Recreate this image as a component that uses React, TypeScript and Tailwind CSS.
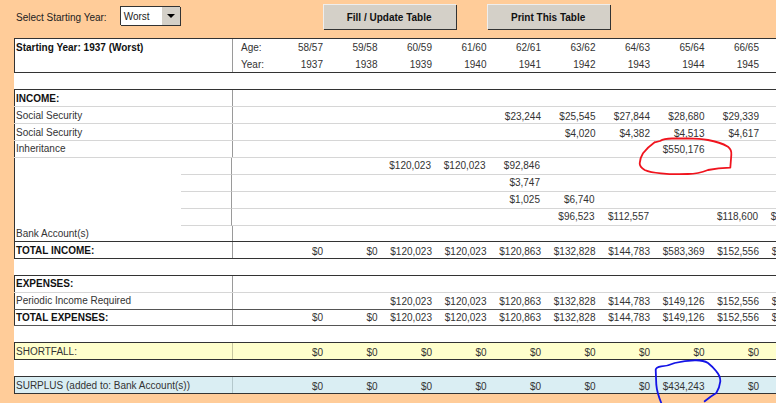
const money = ["$120,023", "$120,023", "$120,863", "$132,828", "$144,783"]

function Cells({ vals }: { vals: string[] }) {
  return (
    <>
      {vals.map((v, i) => (
        <div key={i} className="w-[54.5px] shrink-0 text-right whitespace-nowrap">
          {v}
        </div>
      ))}
    </>
  )
}

function Row({
  label,
  vals = [],
  age = "",
  bold = false,
  line = "border-[#d6d6d6]",
  sub = false,
  low = false,
  short = false,
  divider = "border-[#9a9a9a]",
}: {
  label?: string
  vals?: string[]
  age?: string
  bold?: boolean
  line?: string
  sub?: boolean
  low?: boolean
  short?: boolean
  divider?: string
}) {
  return (
    <div className={`flex items-center ${short ? "h-[16px]" : "h-[17px]"} ${sub ? "" : `border-b ${line}`}`}>
      {sub ? (
        <div className="flex h-full w-[217px] shrink-0 border-l border-[#333]">
          <div className="w-[167px]" />
          <div className="w-[50px] border-b border-[#d6d6d6]" />
        </div>
      ) : (
        <div
          className={`h-full w-[218px] shrink-0 border-l border-[#333] pl-[1px] whitespace-nowrap ${low ? "leading-[18px]" : "leading-[16px]"} ${bold ? "font-bold text-[#111]" : ""}`}
        >
          {label}
        </div>
      )}
      <div
        className={`flex h-full flex-1 items-center border-l ${divider} ${low ? "pt-[2px]" : ""} ${sub ? "border-b border-b-[#d6d6d6] pb-[2px]" : ""}`}
      >
        <div className="w-[35.5px] shrink-0 pl-[8px]">{age}</div>
        <Cells vals={vals} />
      </div>
    </div>
  )
}

export default function App() {
  return (
    <div
      className="relative flex h-[403px] w-[776px] flex-col overflow-hidden bg-[#ffcc99] text-[10px] text-[#333]"
      style={{ fontFamily: '"Liberation Sans", Arial, sans-serif' }}
    >
      {/* Toolbar */}
      <div className="flex h-[38px] shrink-0 items-start">
        <span className="ml-[16px] mt-[10px] text-[#222]">Select Starting Year:</span>
        <div className="ml-[13px] mt-[6px] flex h-[19px] w-[60px] border-t border-l border-[#333] bg-white shadow-[1px_1px_0_#333]">
          <span className="flex-1 pl-[3px] leading-[19px] text-[#222]">Worst</span>
          <div className="flex w-[18px] items-center justify-center bg-[#d4d0c8]">
            <div className="h-0 w-0 border-x-[4px] border-t-[4px] border-x-transparent border-t-black" />
          </div>
        </div>
        <button className="ml-[143px] mt-[4px] h-[25px] w-[133px] bg-[#d4d0c8] pt-[1px] text-center font-bold text-[#111] shadow-[1px_1px_0_#333,inset_1px_1px_0_#eeeeee]">
          Fill / Update Table
        </button>
        <button className="ml-[31px] mt-[4px] h-[25px] w-[123px] bg-[#d4d0c8] pt-[1px] text-center font-bold text-[#111] shadow-[1px_1px_0_#333,inset_1px_1px_0_#eeeeee]">
          Print This Table
        </button>
      </div>

      {/* Sheet */}
      <div className="ml-[14px] h-[356px] w-[900px] shrink-0 bg-white">
        <div className="border-t border-[#333]">
          <div className="flex h-[17px] items-center">
            <div className="h-full w-[218px] shrink-0 border-l border-[#333] pl-[1px] leading-[18px] font-bold text-[#111]">
              Starting Year: 1937 (Worst)
            </div>
            <div className="flex h-full flex-1 items-center border-l border-[#9a9a9a]">
              <div className="w-[35.5px] shrink-0 pl-[8px]">Age:</div>
              <Cells vals={["58/57", "59/58", "60/59", "61/60", "62/61", "63/62", "64/63", "65/64", "66/65"]} />
            </div>
          </div>
          <Row
            age="Year:"
            line="border-[#333]"
            vals={["1937", "1938", "1939", "1940", "1941", "1942", "1943", "1944", "1945"]}
          />
        </div>

        <div className="mt-[16px] border-t border-[#333]">
          <Row low label="INCOME:" bold />
          <Row low label="Social Security" vals={["", "", "", "", "$23,244", "$25,545", "$27,844", "$28,680", "$29,339"]} />
          <Row low label="Social Security" vals={["", "", "", "", "", "$4,020", "$4,382", "$4,513", "$4,617"]} />
          <Row label="Inheritance" vals={["", "", "", "", "", "", "", "$550,176"]} />
          <Row sub vals={["", "", "$120,023", "$120,023", "$92,846"]} />
          <Row sub vals={["", "", "", "", "$3,747"]} />
          <Row sub vals={["", "", "", "", "$1,025", "$6,740"]} />
          <Row sub vals={["", "", "", "", "", "$96,523", "$112,557", "", "$118,600", "$126,000"]} />
          <Row short label="Bank Account(s)" line="border-[#333]" />
          <Row
            low
            label="TOTAL INCOME:"
            bold
            line="border-[#333]"
            vals={["$0", "$0", ...money, "$583,369", "$152,556", "$156,000"]}
          />
        </div>

        <div className="mt-[16px] border-t border-[#333]">
          <Row label="EXPENSES:" bold />
          <Row
            label="Periodic Income Required"
            line="border-[#555]"
            vals={["", "", ...money, "$149,126", "$152,556", "$156,000"]}
          />
          <Row
            short
            label="TOTAL EXPENSES:"
            bold
            line="border-[#555]"
            vals={["$0", "$0", ...money, "$149,126", "$152,556", "$156,000"]}
          />
        </div>

        <div className="mt-[16px] border-t border-[#333] bg-[#ffffcc]">
          <Row
            low
            label="SHORTFALL:"
            line="border-[#333]"
            divider="border-[#c8c8a0]"
            vals={["$0", "$0", "$0", "$0", "$0", "$0", "$0", "$0", "$0"]}
          />
        </div>

        <div className="mt-[16px] border-t border-[#333] bg-[#daeef3]">
          <Row
            low
            label="SURPLUS (added to: Bank Account(s))"
            line="border-[#333]"
            divider="border-[#b4c8cc]"
            vals={["$0", "$0", "$0", "$0", "$0", "$0", "$0", "$434,243", "$0"]}
          />
        </div>
      </div>

      {/* Hand-drawn marks */}
      <svg className="pointer-events-none absolute top-0 left-0" width="776" height="403" fill="none" strokeLinecap="round" strokeLinejoin="round">
        <path
          d="M654.7 142.3 L660 141 Q664 138.5 672 138.5 L688 138.3 Q700 138.5 708 140 Q720 142 728 146.7 Q732 150 731.3 155 L730.3 167.7 Q718 168 708 170 Q698 174 688 174 Q672 174.5 661 173.3 Q650 172.5 644.7 170 Q639.5 167 639.7 163.3 Q640 158 643 153.3 Q648 147 654.7 142.3"
          stroke="#f0141e"
          strokeWidth="1.8"
        />
        <path
          d="M661.3 403 Q657 393 656.3 384.7 L655.7 369.7 Q656 367 661.3 366.3 Q668 366 674.7 363 Q685 360.5 694.7 360.3 Q703 360 708 363 Q713 367 716.3 371.3 Q720.5 376 720.3 381.3 Q719.5 388 716.3 393 Q711 396 704.7 401.3"
          stroke="#1414e6"
          strokeWidth="1.8"
        />
      </svg>
    </div>
  )
}
